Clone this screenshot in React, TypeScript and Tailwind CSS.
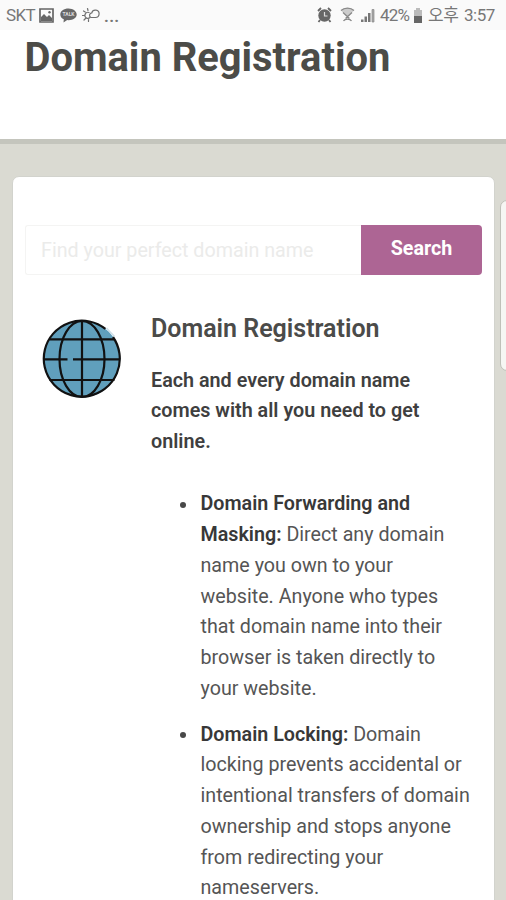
const features = [
  {
    title: ["Domain Forwarding and", "Masking:"],
    lines: [
      "Direct any domain",
      "name you own to your",
      "website. Anyone who types",
      "that domain name into their",
      "browser is taken directly to",
      "your website.",
    ],
  },
  {
    title: ["Domain Locking:"],
    lines: [
      "Domain",
      "locking prevents accidental or",
      "intentional transfers of domain",
      "ownership and stops anyone",
      "from redirecting your",
      "nameservers.",
    ],
  },
];

function StatusBar() {
  return (
    <div className="flex h-[30px] shrink-0 items-center justify-between bg-[#fafafa] pl-[6px] pr-[11px] text-[17px] leading-[30px] text-[#777777]">
      <div className="flex items-center">
        <span className="w-[29px] tracking-[-0.6px]">SKT</span>
        <svg width="15" height="15" viewBox="0 0 15 15" className="ml-[4px]">
          <path d="M1 1h13v13H1z" fill="none" stroke="#666" strokeWidth="1.7" />
          <path d="M2 12V9l3-3 3 3 2-2 3 3v3H2z" fill="#666" />
          <circle cx="10.5" cy="4.3" r="1.2" fill="#666" />
        </svg>
        <svg width="17" height="15" viewBox="0 0 17 15" className="ml-[6px]">
          <path d="M8.5.5C3.8.5.3 3 .3 6.500c0 2.200 1.400 3.900 3.500 4.800L3.500 14.500l3.700-2.400 1.300.1c4.700 0 8.200-2.500 8.200-5.700S13.200.5 8.500.5z" fill="#686868" />
          <text x="8.5" y="8.2" fill="#ddd" fontSize="5" fontWeight="700" textAnchor="middle">TALK</text>
        </svg>
        <svg width="18" height="16" viewBox="0 0 18 16" className="ml-[5px]" fill="none" stroke="#707070" strokeWidth="1.2" strokeLinecap="round">
          <path d="M7 5.5a3 3 0 1 0 1 5M5.500 1.500l.5 2M1.500 4l1.700 1M.5 8.500h2M2 13l1.500-1.500M6.500 14.500v-2" />
          <path d="M9 10.500h4.500a3.700 3.700 0 1 0-3.700-4.600A2.400 2.400 0 0 0 9 10.500z" />
        </svg>
        <span className="ml-[4px] pt-[2px] font-semibold tracking-[0.3px]">...</span>
      </div>
      <div className="flex items-center">
        <svg width="15" height="16" viewBox="0 0 15 16">
          <circle cx="7.5" cy="8.5" r="6.2" fill="#666" />
          <path d="M1 4l3-3M14 4l-3-3M3 13l-1.500 2M12 13l1.500 2" stroke="#666" strokeWidth="1.8" />
          <path d="M7.500 5v4h3" fill="none" stroke="#ddd" strokeWidth="1.2" />
        </svg>
        <svg width="15" height="16" viewBox="0 0 15 16" className="ml-[8px]">
          <path d="M1 3.500C4.500.3 10.500.3 14 3.500L7.500 10z" fill="#ccc" />
          <path d="M1 3.500C4.500.3 10.500.3 14 3.500M3 5.500l6.500 6M12 5.500l-6.500 6M3.500 14c1.500-2.500 6.500-2.500 8 0" fill="none" stroke="#888" strokeWidth="1.3" />
        </svg>
        <svg width="16" height="16" viewBox="0 0 16 16" className="ml-[5px]">
          <path d="M1 12.500h2.500V15H1zM4.500 9.500H7V15H4.500zM8 6h2.500v9H8z" fill="#777" />
          <path d="M12 2.500h2V15h-2z" fill="#aaa" stroke="#888" strokeWidth="0.7" />
        </svg>
        <span className="ml-[4px] w-[31px] tracking-[-0.8px]">42%</span>
        <svg width="10" height="15" viewBox="0 0 10 15" className="ml-[2px]">
          <path d="M3 0h4v2h2v13H1V2h2z" fill="#bbb" />
          <path d="M1 8h8v7H1z" fill="#666" />
        </svg>
        <span className="ml-[5px] w-[32px] tracking-[-0.5px]">오후</span>
        <span className="ml-[4px] w-[31px] tracking-[-0.5px]">3:57</span>
      </div>
    </div>
  );
}

function Globe() {
  return (
    <svg width="80" height="80" viewBox="0 0 80 80" className="mt-[2px] shrink-0">
      <circle cx="40" cy="40" r="38.3" fill="#609fbc" />
      <g fill="none" stroke="#111" strokeWidth="2.2">
        <path d="M63.4 9.900A38 38 0 1 0 71 18" />
        <ellipse cx="40" cy="40" rx="22.5" ry="38" />
        <path d="M40 2v76M7.500 20.300h65M7.500 61h65M2 40.300h23.500M31 40.300h47" />
      </g>
      <path d="M64.500 9l8 8.500" stroke="#cfe0e8" strokeWidth="1.5" />
    </svg>
  );
}

export default function App() {
  return (
    <div className="relative flex h-[900px] w-[506px] flex-col overflow-hidden bg-[#dadad2] font-['Roboto','Noto_Sans_CJK_KR',sans-serif] text-[#4b4b49]">
      <StatusBar />
      <header className="h-[114px] shrink-0 border-b-[5px] border-[#c4c5bd] bg-white pl-[24.5px]">
        <h1 className="pt-[3px] text-[39.9px] font-bold leading-[50px] text-[#4c4c48]">Domain Registration</h1>
      </header>

      <main className="ml-3 mt-8 h-[760px] w-[483px] shrink-0 rounded-[7px] border border-[#d2d3cd] bg-white pl-3 pt-[48px]">
        <form className="flex h-[49.5px] w-[457px]" onSubmit={(e) => e.preventDefault()}>
          <input
            type="text"
            placeholder="Find your perfect domain name"
            className="w-[336px] rounded-l-[3px] border border-r-0 border-[#f4f4f3] pl-[15px] pt-[3px] text-[19.7px] outline-none placeholder:text-[#ebebea]"
          />
          <button className="w-[121px] rounded-r-[4px] bg-[#ad6594] pb-[2px] text-[19.7px] font-bold text-white">
            Search
          </button>
        </form>

        <section className="mt-[42px] flex pl-[16.5px]">
          <Globe />
          <div className="ml-[29.5px] w-[330px]">
            <h2 className="text-[25px] font-semibold leading-[24px]">Domain Registration</h2>
            <p className="mt-[25px] whitespace-nowrap text-[19.75px] font-semibold leading-[30.75px] text-[#3f3f3f]">
              Each and every domain name
              <br />
              comes with all you need to get
              <br />
              online.
            </p>
            <ul className="mt-[31.5px] flex flex-col gap-[15px] pl-[49.5px] text-[19.7px] leading-[30.75px] text-[#555555]">
              {features.map((feature) => (
                <li key={feature.title[0]} className="relative">
                  <span className="absolute -left-[21px] top-[12.5px] size-[6px] rounded-full bg-[#484848]" />
                  {feature.title.map((line, i) => (
                    <strong key={line} className="whitespace-nowrap font-semibold text-[#383838]">
                      {i > 0 && <br />}
                      {line}
                    </strong>
                  ))}{" "}
                  {feature.lines.map((line, i) => (
                    <span key={line} className="whitespace-nowrap">
                      {i > 0 && <br />}
                      {line}
                    </span>
                  ))}
                </li>
              ))}
            </ul>
          </div>
        </section>
      </main>

      {/* edge panel handle */}
      <div className="absolute -right-[8px] top-[200px] h-[171px] w-[14px] rounded-[7px] border border-[#bfc0b8] bg-[#f6f6f3]" />
    </div>
  );
}
